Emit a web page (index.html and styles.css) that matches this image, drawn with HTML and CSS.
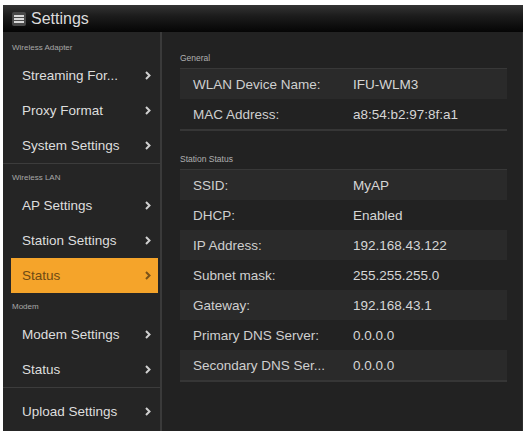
FILE: index.html
```html
<!DOCTYPE html>
<html lang="en">
<head>
  <meta charset="UTF-8">
  <meta name="viewport" content="width=device-width, initial-scale=1.0">
  <title>Settings</title>
  <link rel="stylesheet" href="styles.css">
</head>
<body>
  <div class="screen">
    <div class="titlebar">
      <svg class="menu-icon" width="14" height="14" viewBox="0 0 14 14">
        <rect x="0" y="0" width="14" height="14" rx="2" fill="#4a4a4a"/>
        <rect x="2" y="3" width="10" height="2" fill="#d8d8d8"/>
        <rect x="2" y="6" width="10" height="2" fill="#d8d8d8"/>
        <rect x="2" y="9" width="10" height="2" fill="#d8d8d8"/>
      </svg>
      <span class="title">Settings</span>
    </div>

    <div class="main">
      <!-- left menu -->
      <div class="sidebar">
        <div class="menu-group">
          <div class="menu-header first">Wireless Adapter</div>
          <div class="menu-item"><span>Streaming For...</span><svg class="chev" width="6" height="9" viewBox="0 0 6 9"><path d="M1 1l3.5 3.5L1 8" fill="none" stroke="currentColor" stroke-width="2"/></svg></div>
          <div class="menu-item"><span>Proxy Format</span><svg class="chev" width="6" height="9" viewBox="0 0 6 9"><path d="M1 1l3.5 3.5L1 8" fill="none" stroke="currentColor" stroke-width="2"/></svg></div>
          <div class="menu-item"><span>System Settings</span><svg class="chev" width="6" height="9" viewBox="0 0 6 9"><path d="M1 1l3.5 3.5L1 8" fill="none" stroke="currentColor" stroke-width="2"/></svg></div>
        </div>
        <div class="menu-group">
          <div class="menu-header">Wireless LAN</div>
          <div class="menu-item"><span>AP Settings</span><svg class="chev" width="6" height="9" viewBox="0 0 6 9"><path d="M1 1l3.5 3.5L1 8" fill="none" stroke="currentColor" stroke-width="2"/></svg></div>
          <div class="menu-item"><span>Station Settings</span><svg class="chev" width="6" height="9" viewBox="0 0 6 9"><path d="M1 1l3.5 3.5L1 8" fill="none" stroke="currentColor" stroke-width="2"/></svg></div>
          <div class="menu-item active"><span>Status</span><svg class="chev" width="6" height="9" viewBox="0 0 6 9"><path d="M1 1l3.5 3.5L1 8" fill="none" stroke="currentColor" stroke-width="2"/></svg></div>
          <div class="menu-header">Modem</div>
          <div class="menu-item"><span>Modem Settings</span><svg class="chev" width="6" height="9" viewBox="0 0 6 9"><path d="M1 1l3.5 3.5L1 8" fill="none" stroke="currentColor" stroke-width="2"/></svg></div>
          <div class="menu-item"><span>Status</span><svg class="chev" width="6" height="9" viewBox="0 0 6 9"><path d="M1 1l3.5 3.5L1 8" fill="none" stroke="currentColor" stroke-width="2"/></svg></div>
        </div>
        <div class="menu-group last">
          <div class="menu-item"><span>Upload Settings</span><svg class="chev" width="6" height="9" viewBox="0 0 6 9"><path d="M1 1l3.5 3.5L1 8" fill="none" stroke="currentColor" stroke-width="2"/></svg></div>
        </div>
      </div>

      <!-- status detail -->
      <div class="content">
        <div class="section-title first">General</div>
        <div class="table">
          <div class="row"><span class="label">WLAN Device Name:</span><span class="value">IFU-WLM3</span></div>
          <div class="row"><span class="label">MAC Address:</span><span class="value">a8:54:b2:97:8f:a1</span></div>
        </div>

        <div class="section-title">Station Status</div>
        <div class="table">
          <div class="row"><span class="label">SSID:</span><span class="value">MyAP</span></div>
          <div class="row"><span class="label">DHCP:</span><span class="value">Enabled</span></div>
          <div class="row"><span class="label">IP Address:</span><span class="value">192.168.43.122</span></div>
          <div class="row"><span class="label">Subnet mask:</span><span class="value">255.255.255.0</span></div>
          <div class="row"><span class="label">Gateway:</span><span class="value">192.168.43.1</span></div>
          <div class="row"><span class="label">Primary DNS Server:</span><span class="value">0.0.0.0</span></div>
          <div class="row"><span class="label">Secondary DNS Ser...</span><span class="value">0.0.0.0</span></div>
        </div>
      </div>
    </div>
  </div>
</body>
</html>
```

FILE: styles.css
```css
body {
  margin: 0;
  background: #fff;
  font-family: "Liberation Sans", Arial, sans-serif;
  overflow: hidden;
}
.screen {
  margin: 5px 0 0 3px;
  height: 426px;
  background: #222;
  display: flex;
  flex-direction: column;
}
.titlebar {
  height: 27px;
  display: flex;
  align-items: center;
  padding-left: 9px;
  background: linear-gradient(#343434 0%, #1c1c1c 40%, #050505 100%);
  flex-shrink: 0;
}
.menu-icon {
  margin-right: 5px;
}
.title {
  color: #dcdcdc;
  font-size: 16px;
}
.main {
  flex: 1;
  display: flex;
}
.sidebar {
  width: 157px;
  background: #252525;
  border-right: 2px solid #3a3a3a;
  flex-shrink: 0;
}
.menu-group {
  border-bottom: 1px solid #3c3c3c;
}
.menu-group.last {
  border-bottom: none;
  margin-top: 6px;
}
.menu-header {
  padding: 9px 0 5px 9px;
  font-size: 8px;
  line-height: 10px;
  color: #a8a8a8;
}
.menu-header.first {
  padding-top: 11px;
}
.menu-item {
  height: 35px;
  margin-left: 8px;
  margin-right: 2px;
  padding: 0 7px 0 11px;
  display: flex;
  align-items: center;
  justify-content: space-between;
  color: #dedede;
  font-size: 13.5px;
}
.menu-item .chev {
  color: #d0d0d0;
}
.menu-item.active {
  background: #f5a42a;
  color: #6e4a14;
}
.menu-item.active .chev {
  color: #7a5218;
}
.content {
  flex: 1;
  padding: 0 15px 0 18px;
  border-right: 1px solid #2e2e2e;
}
.section-title {
  padding: 20px 0 5px;
  font-size: 8.5px;
  line-height: 10px;
  color: #b0b0b0;
}
.section-title.first {
  padding-top: 21px;
}
.table {
  border-top: 1px solid #383838;
  border-bottom: 2px solid #363636;
  margin-bottom: 3px;
}
.row {
  height: 30px;
  display: flex;
  align-items: center;
  padding-left: 13px;
  font-size: 13.5px;
}
.row:nth-child(odd) {
  background: #2a2a2a;
}
.label {
  width: 160px;
  color: #cfcfcf;
}
.value {
  color: #d6d6d6;
}
```
